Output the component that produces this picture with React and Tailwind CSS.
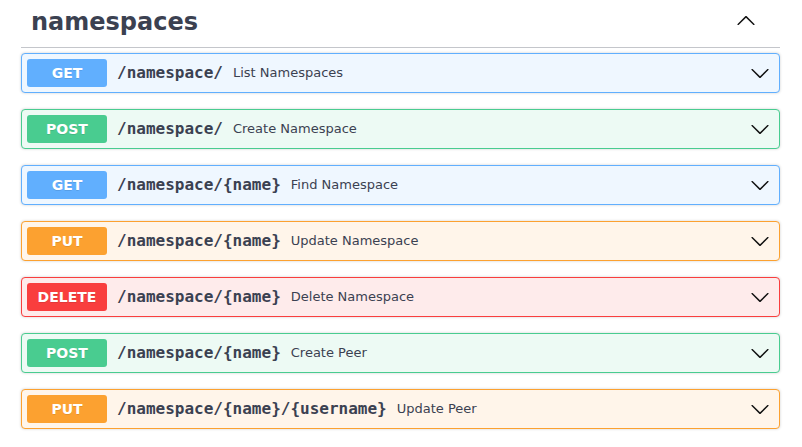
import React from 'react';

const methodStyles = {
  GET: { row: 'bg-[#eff7ff] border-[#61affe]', badge: 'bg-[#61affe]' },
  POST: { row: 'bg-[#edfaf4] border-[#49cc90]', badge: 'bg-[#49cc90]' },
  PUT: { row: 'bg-[#fff5ea] border-[#fca130]', badge: 'bg-[#fca130]' },
  DELETE: { row: 'bg-[#feebeb] border-[#f93e3e]', badge: 'bg-[#f93e3e]' },
};

const operations = [
  { method: 'GET', path: '/namespace/', summary: 'List Namespaces' },
  { method: 'POST', path: '/namespace/', summary: 'Create Namespace' },
  { method: 'GET', path: '/namespace/{name}', summary: 'Find Namespace' },
  { method: 'PUT', path: '/namespace/{name}', summary: 'Update Namespace' },
  { method: 'DELETE', path: '/namespace/{name}', summary: 'Delete Namespace' },
  { method: 'POST', path: '/namespace/{name}', summary: 'Create Peer' },
  { method: 'PUT', path: '/namespace/{name}/{username}', summary: 'Update Peer' },
];

const Arrow = ({ up = false }) => (
  <svg
    width="20"
    height="20"
    viewBox="0 0 20 20"
    className={`shrink-0 ${up ? 'rotate-180' : ''}`}
  >
    <path
      fill="#111"
      d="M17.418 6.109c.272-.268.709-.268.979 0s.271.701 0 .969l-7.908 7.83c-.27.268-.707.268-.979 0l-7.908-7.83c-.27-.268-.27-.701 0-.969.271-.268.709-.268.979 0L10 13.25l7.418-7.141z"
    />
  </svg>
);

function OperationRow({ method, path, summary }) {
  const style = methodStyles[method];
  return (
    <div
      className={`flex items-center h-[40px] mb-[16px] border rounded-[4px] shadow-[0_0_3px_rgba(0,0,0,0.19)] px-[5px] ${style.row}`}
    >
      <span
        className={`w-[80px] h-[28px] flex items-center justify-center rounded-[3px] text-white text-[14px] font-bold [text-shadow:0_1px_0_rgba(0,0,0,0.1)] ${style.badge}`}
      >
        {method}
      </span>
      <span className="px-[10px] text-[16px] font-bold text-[#3b4151] font-['DejaVu_Sans_Mono',monospace]">
        {path}
      </span>
      <span className="flex-1 text-[13px] text-[#3b4151]">{summary}</span>
      <div className="mr-[4px]">
        <Arrow />
      </div>
    </div>
  );
}

export default function App() {
  return (
    <div className="min-h-screen bg-white pl-[21px] pr-[22px] font-['DejaVu_Sans',sans-serif]">
      {/* Tag heading */}
      <div className="h-[48px] border-b border-[#c4c6cb] flex items-start justify-between pl-[10px] pr-[24px] mb-[5px]">
        <h3 className="pt-[8px] text-[24px] leading-[28px] font-bold text-[#3b4151]">
          namespaces
        </h3>
        <div className="pt-[11px]">
          <Arrow up />
        </div>
      </div>

      {operations.map((op, i) => (
        <OperationRow key={i} {...op} />
      ))}
    </div>
  );
}
